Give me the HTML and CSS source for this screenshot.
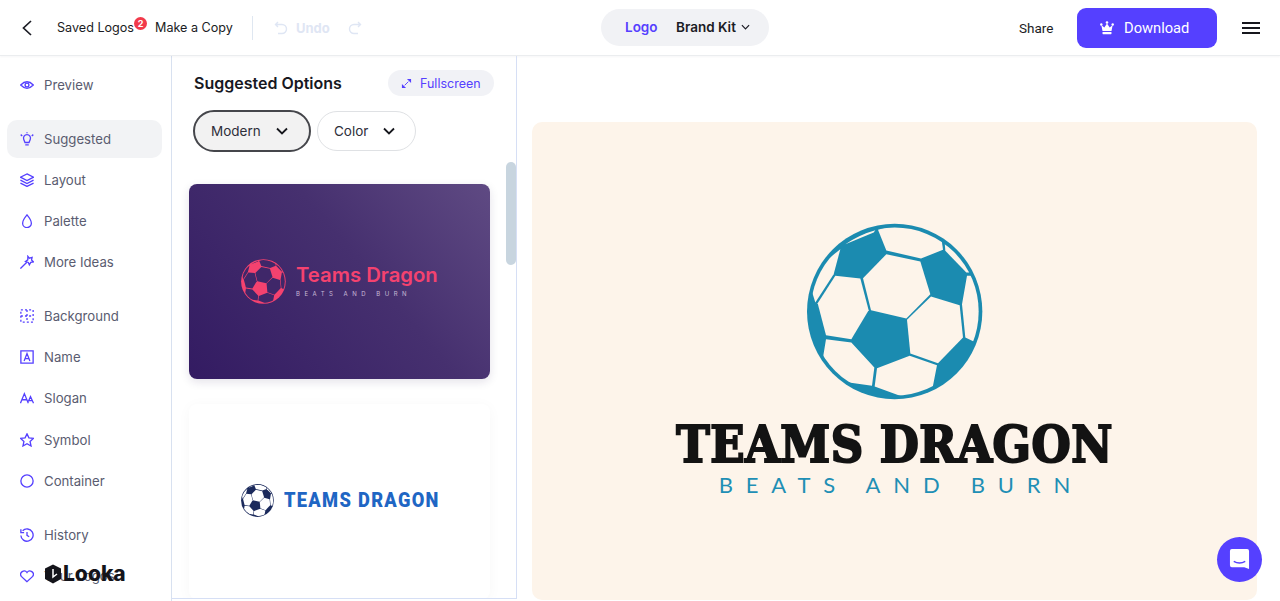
FILE: index.html
```html
<!DOCTYPE html>
<html lang="en">
<head>
<meta charset="utf-8">
<title>Looka editor</title>
<link rel="stylesheet" href="styles.css">
</head>
<body>
<svg class="defs" width="0" height="0" aria-hidden="true">
  <defs><clipPath id="ball-clip"><circle cx="343" cy="307" r="252"/></clipPath></defs>
  <symbol id="ball" viewBox="80 42 528 530">
    <circle class="ball-base" cx="343" cy="307" r="263"/>
    <g class="ball-panels" clip-path="url(#ball-clip)">
      <path d="M293 62Q380 30 483 86L488 122L422 148L318 124Z"/>
      <path d="M318 135L420 157L450 255L378 328L272 303L248 207Z"/>
      <path d="M165 200L240 208L265 303L213 390L137 378L112 282Z"/>
      <path d="M452 262L538 288L548 385L473 462L390 433L380 332Z"/>
      <path d="M137 390L213 400L282 475L275 530L190 518L100 500L128 445Z"/>
      <path d="M290 477L388 440L470 468L457 535L420 590L365 562L283 532Z"/>
      <path d="M180 120L160 195L105 280L80 200Z"/>
      <path d="M195 105Q240 75 285 63L280 70Z"/>
      <path d="M493 100L590 100L568 190L558 190L495 125Z"/>
      <path d="M560 200L610 200L610 420L580 397L555 385L545 285Z"/>
    </g>
  </symbol>
</svg>

<header class="topbar">
  <div class="top-left">
    <svg class="back" viewBox="0 0 12 16"><path d="M10 1L2.500 8L10 15"/></svg>
    <span class="saved">Saved Logos<span class="badge">2</span></span>
    <span class="copy">Make a Copy</span>
    <span class="divider"></span>
    <svg class="hist" viewBox="0 0 14 14"><path d="M4 1L1.500 3.500L4 6M2 3.500H8a4.500 4.500 0 0 1 0 9H4"/></svg>
    <span class="undo">Undo</span>
    <svg class="hist redo" viewBox="0 0 14 14"><path d="M10 1L12.500 3.500L10 6M12 3.500H6a4.500 4.500 0 0 0 0 9H10"/></svg>
  </div>
  <nav class="switch">
    <span class="switch-on">Logo</span>
    <span class="switch-off">Brand Kit</span>
    <svg class="mini-chev" viewBox="0 0 10 6"><path d="M1 1L5 5L9 1"/></svg>
  </nav>
  <div class="top-right">
    <span class="share">Share</span>
    <button class="download">
      <svg class="crown" viewBox="0 0 14 14"><circle cx="7" cy="1.500" r="1.300"/><circle cx="1.300" cy="3.500" r="1.200"/><circle cx="12.700" cy="3.500" r="1.200"/><path d="M1.300 4L4.300 6.500L7 2.500L9.700 6.500L12.700 4L11.500 10H2.500Z"/><rect x="2.500" y="11" width="9" height="2.200" rx=".6"/></svg>
      Download
    </button>
    <div class="burger"><i></i><i></i><i></i></div>
  </div>
</header>

<main class="workspace">
  <aside class="sidebar">
    <div class="group">
      <a class="item"><svg viewBox="0 0 16 16"><path d="M.8 8Q8 .5 15.200 8Q8 15.500 .8 8Z"/><circle cx="8" cy="8" r="2.200"/></svg>Preview</a>
    </div>
    <div class="group">
      <a class="item active"><svg viewBox="0 0 16 16"><path d="M4.300 8.500a4 4 0 1 1 7.400 0L10.300 12H5.700Z M6 14.800H10M.8 3L2.600 4.500M15.200 3L13.400 4.500M8 .2V1.500"/></svg>Suggested</a>
      <a class="item"><svg viewBox="0 0 16 16"><path d="M8 1L15.500 4.800L8 8.600L.5 4.800ZM.5 8.200L8 12L15.500 8.200M.5 11.500L8 15.300L15.500 11.500"/></svg>Layout</a>
      <a class="item"><svg viewBox="0 0 16 16"><path d="M8 1Q13 7 13 10.500a5 5 0 0 1-10 0Q3 7 8 1Z"/></svg>Palette</a>
      <a class="item"><svg viewBox="0 0 16 16"><path d="M.5 15.500L7.500 8.500M9 1.500L10.700 3.700L13.800 2.700L13.200 5.800L15.500 8L12.300 8.500L10.700 11.200L9.500 8.500L6.300 7.500L8.900 5.500Z"/></svg>More Ideas</a>
    </div>
    <div class="group">
      <a class="item"><svg viewBox="0 0 16 16"><path class="dash" d="M1 1H15V15H1Z"/><path class="dash" d="M8 1V15M1 8H15"/></svg>Background</a>
      <a class="item"><svg viewBox="0 0 16 16"><path d="M1 1H15V15H1ZM4.700 12.500L8 4L11.300 12.500M5.900 9.800H10.100"/></svg>Name</a>
      <a class="item"><svg viewBox="0 0 16 16"><path d="M.5 14L5 3L9.500 14M2.300 10H7.700M9.500 12L12 6.500L15.500 14M10.500 11H14.500"/></svg>Slogan</a>
      <a class="item"><svg viewBox="0 0 16 16"><path d="M8 1L10.200 5.600L15.300 6.200L11.500 9.700L12.600 14.800L8 12.200L3.400 14.800L4.500 9.700L.7 6.200L5.800 5.600Z"/></svg>Symbol</a>
      <a class="item"><svg viewBox="0 0 16 16"><circle cx="8" cy="8" r="7"/></svg>Container</a>
    </div>
    <div class="group">
      <a class="item"><svg viewBox="0 0 16 16"><path d="M3 3.200A7 7 0 1 1 1 8.500M1 1.500V5.200H4.700M8 4.500V8.500L10.500 10"/></svg>History</a>
      <a class="item"><svg viewBox="0 0 16 16"><path d="M8 14.500L1.500 8.500A3.800 3.800 0 0 1 8 4A3.800 3.800 0 0 1 14.500 8.500Z"/></svg>Your Logos</a>
    </div>
  </aside>

  <section class="panel">
    <div class="panel-head">
      <h2>Suggested Options</h2>
      <button class="fullscreen">
        <svg viewBox="0 0 12 12"><path class="fs-arrow" d="M6.500 1H11V5.500ZM1 6.500V11H5.500Z"/><path d="M4 8L8 4"/></svg>
        Fullscreen
      </button>
    </div>
    <div class="filters">
      <button class="filter filter-on">Modern<svg viewBox="0 0 12 8"><path d="M1 1.500L6 6.500L11 1.500"/></svg></button>
      <button class="filter">Color<svg viewBox="0 0 12 8"><path d="M1 1.500L6 6.500L11 1.500"/></svg></button>
    </div>
    <div class="cards">
      <article class="card card-dark">
        <svg class="card-ball pink"><use href="#ball"/></svg>
        <div class="card-words">
          <div class="pink-name">Teams Dragon</div>
          <div class="pink-sub">BEATS AND BURN</div>
        </div>
      </article>
      <article class="card card-light">
        <svg class="card-ball navy"><use href="#ball"/></svg>
        <div class="blue-name">TEAMS DRAGON</div>
      </article>
    </div>
    <div class="scroll-thumb"></div>
  </section>

  <section class="stage">
    <div class="artboard">
      <svg class="big-ball"><use href="#ball"/></svg>
      <div class="big-name">TEAMS DRAGON</div>
      <div class="big-sub">BEATS AND BURN</div>
    </div>
  </section>
</main>

<div class="looka">
  <svg viewBox="0 0 18 20"><path d="M9 .5L17 4.500V15L9 19.500L1 15V4.500Z"/><path class="looka-cut" d="M9 5V13L13 10"/></svg>
  Looka
</div>
<div class="chat">
  <svg viewBox="0 0 22 24"><path class="chat-body" d="M3 1H19a2 2 0 0 1 2 2V22L16 20H3a2 2 0 0 1-2-2V3a2 2 0 0 1 2-2Z"/><path class="chat-smile" d="M5 14Q11 17.500 17 14"/></svg>
</div>
</body>
</html>
```
FILE: styles.css
```css
* { box-sizing: border-box; }
html, body { margin: 0; height: 601px; overflow: hidden; }
body {
  background: #fff;
  font-family: "Inter", "Lato", sans-serif;
  color: #1b1c24;
  --violet: #5540ff;
}
.defs { position: absolute; }
button { font: inherit; cursor: pointer; }

/* top bar */
.topbar {
  height: 56px;
  display: flex;
  align-items: center;
  border-bottom: 1px solid #ebedef;
  box-shadow: 0 1px 2px rgba(20, 30, 60, .04);
  font-size: 12.600px;
  position: relative;
}
.top-left { width: 601px; display: flex; align-items: center; padding-left: 21px; }
.back { width: 12px; height: 16px; fill: none; stroke: #1b1c24; stroke-width: 1.700; }
.saved { margin-left: 24px; position: relative; width: 98px; }
.badge {
  position: absolute;
  left: 77px;
  top: -3px;
  width: 13px;
  height: 13px;
  border-radius: 50%;
  background: #f23a4b;
  color: #fff;
  font-size: 9px;
  font-weight: 700;
  line-height: 13px;
  text-align: center;
}
.copy { width: 97px; }
.divider { width: 1px; height: 24px; background: #dfe7f1; }
.hist { margin-left: 21px; width: 14px; height: 14px; fill: none; stroke: #dfe6f4; stroke-width: 1.400; }
.undo { margin-left: 8px; color: #dfe6f4; font-size: 13px; font-weight: 700; width: 31px; }
.redo { margin-left: 21px; }

.switch {
  width: 168px;
  height: 37px;
  margin-top: -1px;
  border-radius: 19px;
  background: #f1f2f5;
  display: flex;
  align-items: center;
  padding-left: 24px;
  font-size: 13.500px;
  font-weight: 600;
}
.switch-on { color: var(--violet); width: 51px; }
.switch-off { width: 65px; }
.mini-chev { width: 9px; height: 6px; fill: none; stroke: #1b1c24; stroke-width: 1.300; }

.top-right { margin-left: auto; display: flex; align-items: center; padding-right: 20px; }
.share { font-family: "Roboto", sans-serif; font-size: 13.500px; width: 58px; }
.download {
  width: 140px;
  height: 40px;
  border: 0;
  border-radius: 9px;
  background: var(--violet);
  color: #fff;
  font-family: "Roboto", sans-serif;
  font-size: 14.700px;
  display: flex;
  align-items: center;
  padding-left: 23px;
  gap: 10px;
}
.crown { width: 14px; height: 14px; fill: #fff; }
.burger { margin-left: 25px; width: 18px; display: flex; flex-direction: column; gap: 3px; }
.burger i { display: block; height: 2px; background: #16171d; }

/* body */
.workspace { height: 545px; display: flex; }

.sidebar {
  width: 172px;
  flex: none;
  padding: 10px 10px 0 7px;
  border-right: 1px solid #d8e1f0;
  display: flex;
  flex-direction: column;
  gap: 15.500px;
}
.group { display: flex; flex-direction: column; gap: 3.300px; }
.item {
  height: 38px;
  flex: none;
  width: 155px;
  display: flex;
  align-items: center;
  gap: 10px;
  padding-left: 13px;
  border-radius: 10px;
  font-size: 13.200px;
  color: #5a5c70;
}
.item svg { width: 14px; height: 14px; fill: none; stroke: var(--violet); stroke-width: 1.500; flex: none; }
.item .dash { stroke-dasharray: 2.300 2.400; }
.item.active { background: #f2f3f5; }

.panel {
  width: 345px;
  height: 543px;
  flex: none;
  border-right: 1px solid #d6dff5;
  border-bottom: 1px solid #d6dff5;
  position: relative;
  overflow: hidden;
}
.panel-head { display: flex; align-items: center; justify-content: space-between; padding: 14px 22px 0 22px; }
.panel-head h2 { margin: 0; font-size: 16px; font-weight: 600; color: #17181f; }
.fullscreen {
  width: 106px;
  height: 26px;
  border: 0;
  border-radius: 13px;
  background: #f1f2f6;
  color: var(--violet);
  font-size: 12.500px;
  display: flex;
  align-items: center;
  padding-left: 13px;
  gap: 8px;
}
.fullscreen svg { width: 11px; height: 11px; fill: none; stroke: var(--violet); stroke-width: 1; }
.fullscreen .fs-arrow { fill: var(--violet); stroke: none; }
.filters { display: flex; align-items: center; gap: 6px; padding: 14px 0 0 21px; }
.filter {
  height: 40px;
  width: 99px;
  border: 1px solid #dfe1e4;
  border-radius: 21px;
  background: #fff;
  color: #2e2f3a;
  font-size: 13.500px;
  display: flex;
  align-items: center;
  justify-content: space-between;
  padding: 0 20px 0 16px;
}
.filter svg { width: 12px; height: 8px; fill: none; stroke: #16171d; stroke-width: 1.800; }
.filter-on { height: 42px; width: 118px; border: 2px solid #45464b; background: #f2f2f2; padding-right: 21px; }

.cards { display: flex; flex-direction: column; gap: 25px; padding: 32px 0 0 17px; }
.card {
  width: 301px;
  height: 195px;
  flex: none;
  border-radius: 8px;
  display: flex;
  align-items: center;
  padding-left: 52px;
}
.card-dark {
  background: linear-gradient(50deg, #331b62 0%, #46306f 58%, #5f4a83 100%);
  box-shadow: 0 3px 10px rgba(30, 20, 70, .12);
}
.card-light { background: #fff; box-shadow: 0 2px 14px rgba(30, 30, 60, .035); padding-bottom: 3px; }
.card-ball { flex: none; overflow: visible; }
.pink { width: 45px; height: 45px; --base: #f4426f; --panels: #3f2769; }
.navy { width: 33px; height: 33px; margin-right: 10px; --base: #1b2a5c; --panels: #fff; }
.ball-base { fill: var(--base, #1b8bb0); }
.ball-panels { fill: var(--panels, #fdf4ea); }
.card-words { margin-left: 10px; margin-top: -2px; }
.pink-name { color: #f4426f; font-size: 20.300px; font-weight: 600; line-height: 24px; white-space: nowrap; }
.pink-sub { color: #c7bad6; margin-top: 2px; font-size: 6px; letter-spacing: 4.500px; line-height: 10px; white-space: nowrap; }
.blue-name {
  color: #1f66c4;
  font-family: "Roboto", sans-serif;
  font-size: 21px;
  font-weight: 900;
  letter-spacing: 1.500px;
  white-space: nowrap;
  transform: scaleX(.87);
  transform-origin: left center;
}
.scroll-thumb { position: absolute; left: 334px; top: 106px; width: 10px; height: 103px; border-radius: 5px; background: #c8d5df; }

.stage { flex: 1; min-width: 0; padding: 66px 23px 1px 15px; }
.artboard {
  height: 478px;
  padding-top: 2px;
  border-radius: 10px;
  background: #fdf4ea;
  display: flex;
  flex-direction: column;
  align-items: center;
  justify-content: center;
}
.big-ball { width: 176px; height: 177px; flex: none; overflow: visible; margin-top: -3px; }
.big-name {
  margin-top: 21px;
  font-family: "DejaVu Serif", serif;
  font-stretch: condensed;
  font-weight: 700;
  font-size: 50px;
  line-height: 48px;
  letter-spacing: .5px;
  color: #131313;
  -webkit-text-stroke: 2px #131313;
  white-space: nowrap;
}
.big-sub {
  margin-top: 3px;
  color: #1f8fb5;
  font-family: "Lato", sans-serif;
  font-size: 22px;
  line-height: 26px;
  letter-spacing: 12.800px;
  margin-right: -12.800px;
  white-space: nowrap;
}

.looka {
  position: absolute;
  left: 44px;
  top: 561px;
  display: flex;
  align-items: center;
  gap: 1px;
  font-size: 21px;
  font-weight: 800;
  color: #14141a;
}
.looka svg { width: 18px; height: 20px; fill: #14141a; }
.looka .looka-cut { fill: none; stroke: #fff; stroke-width: 1.500; }
.chat {
  position: absolute;
  left: 1217px;
  top: 537px;
  width: 45px;
  height: 45px;
  border-radius: 50%;
  background: var(--violet);
  display: flex;
  align-items: center;
  justify-content: center;
}
.chat svg { width: 21px; height: 23px; }
.chat-body { fill: #fff; }
.chat-smile { fill: none; stroke: var(--violet); stroke-width: 1.500; }
```
